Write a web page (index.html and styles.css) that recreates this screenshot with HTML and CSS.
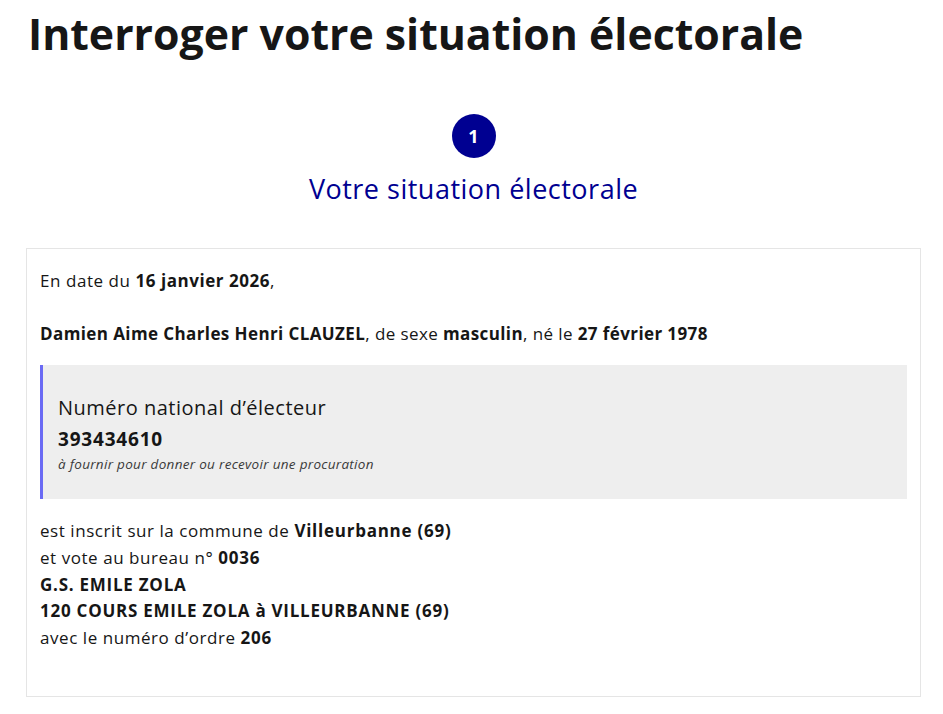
FILE: index.html
```html
<!DOCTYPE html>
<html lang="fr">
<head>
<meta charset="utf-8">
<link rel="stylesheet" href="styles.css">
</head>
<body>
<main class="page">
  <h1 class="title">Interroger votre situation électorale</h1>
  <div class="step">
    <div class="step-num">1</div>
    <h2 class="step-title">Votre situation électorale</h2>
  </div>
  <section class="card">
    <p class="line">En date du <b>16 janvier 2026</b>,</p>
    <p class="line line-last">
      <b>Damien Aime Charles Henri CLAUZEL</b>, de sexe <b>masculin</b>, né le <b>27 février 1978</b>
    </p>
    <div class="highlight">
      <div class="hl-label">Numéro national d’électeur</div>
      <div class="hl-num">393434610</div>
      <div class="hl-note">à fournir pour donner ou recevoir une procuration</div>
    </div>
    <div class="address">
      <div>est inscrit sur la commune de <b>Villeurbanne (69)</b></div>
      <div>et vote au bureau n° <b>0036</b></div>
      <div><b>G.S. EMILE ZOLA</b></div>
      <div><b>120 COURS EMILE ZOLA à VILLEURBANNE (69)</b></div>
      <div>avec le numéro d’ordre <b>206</b></div>
    </div>
  </section>
</main>
</body>
</html>
```
FILE: styles.css
```css
* { box-sizing: border-box; }
html, body { margin: 0; padding: 0; background: #fff; }
body {
  font-family: "Open Sans", "Noto Sans", sans-serif;
  color: #161616;
}
.page {
  padding: 0 22px 0 26px;
}
.title {
  margin: 0;
  padding: 8px 0 0 2px;
  font-size: 42.8px;
  line-height: 52px;
  font-weight: 700;
  color: #161616;
}
.step {
  display: flex;
  flex-direction: column;
  align-items: center;
  margin-top: 54px;
}
.step-num {
  width: 44px;
  height: 44px;
  border-radius: 50%;
  background: #000091;
  color: #fff;
  font-size: 18px;
  font-weight: 700;
  display: flex;
  align-items: center;
  justify-content: center;
}
.step-title {
  margin: 12px 0 0;
  font-size: 27px;
  line-height: 38px;
  font-weight: 400;
  letter-spacing: 0.5px;
  color: #000091;
}
.card {
  margin-top: 40px;
  border: 1px solid #e5e5e5;
  padding: 18px 13px 40px 13px;
  height: 449px;
}
.line {
  margin: 0 0 26px;
  font-size: 17px;
  line-height: 27px;
  letter-spacing: 0.55px;
}
.line-last { margin-bottom: 18px; letter-spacing: 0.4px; }
.line b, .address b { font-weight: 700; }
.highlight {
  background: #eeeeee;
  border-left: 3px solid #6a6af4;
  padding: 28px 16px 24px 15px;
  height: 134px;
}
.hl-label {
  font-size: 20px;
  line-height: 30px;
  font-weight: 400;
  letter-spacing: 0.5px;
}
.hl-num {
  font-size: 19px;
  line-height: 32px;
  font-weight: 700;
  letter-spacing: 0.8px;
}
.hl-note {
  font-size: 13.5px;
  line-height: 18px;
  font-style: italic;
  letter-spacing: 0.3px;
  color: #3a3a3a;
}
.address {
  margin-top: 19px;
  font-size: 17px;
  line-height: 26.75px;
  letter-spacing: 0.55px;
}
.address b { letter-spacing: 0.75px; }
```
